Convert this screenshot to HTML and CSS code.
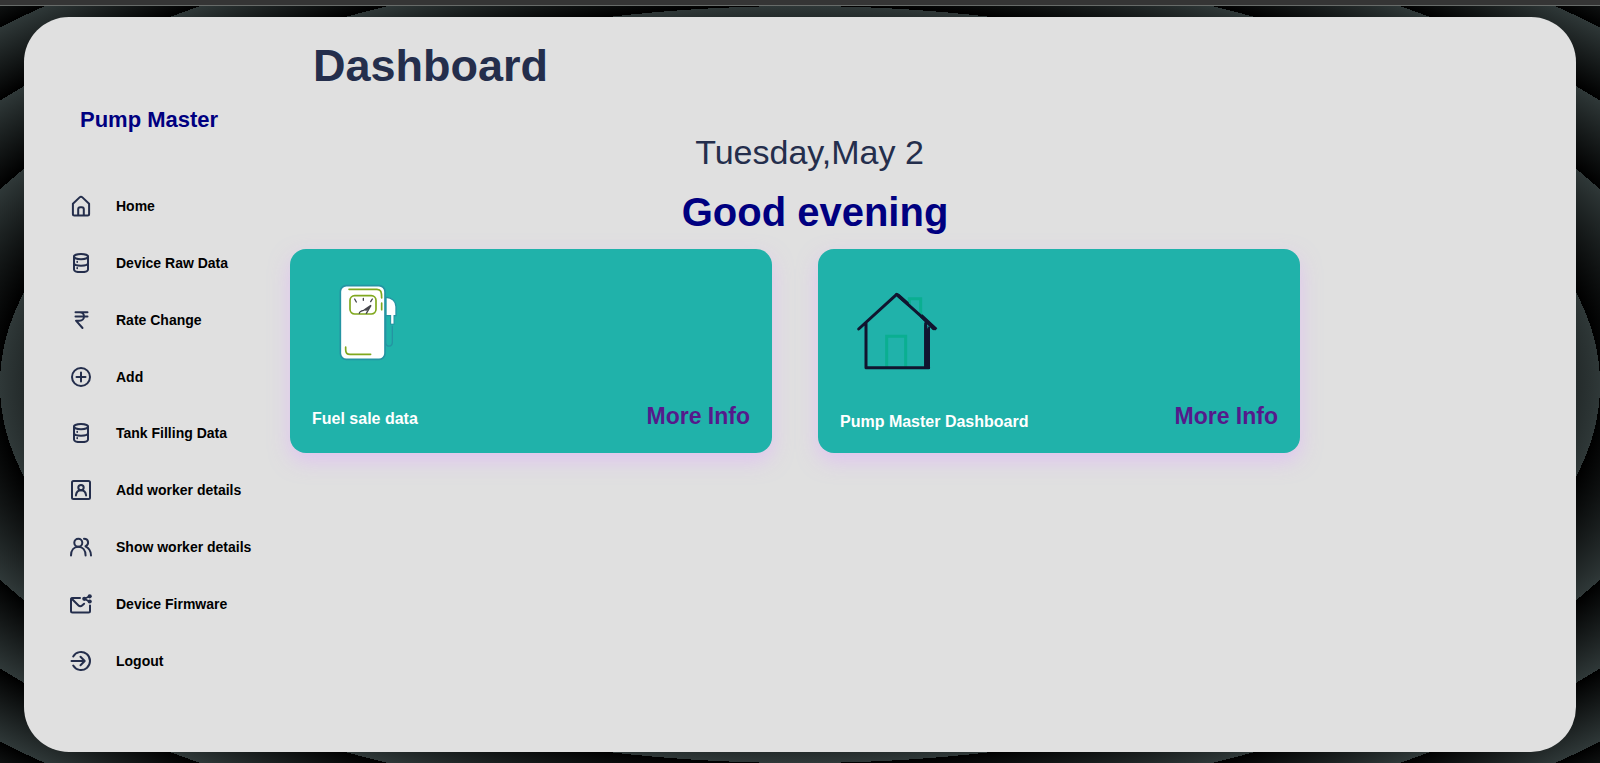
FILE: index.html
```html
<!DOCTYPE html>
<html lang="en">
<head>
<meta charset="utf-8">
<meta name="viewport" content="width=device-width, initial-scale=1">
<title>Pump Master</title>
<link rel="stylesheet" href="styles.css">
</head>
<body>
<div class="topbar"></div>
<div class="page">
  <div class="panel">
    <aside class="sidebar">
      <div class="brand">Pump Master</div>
      <nav class="menu">
        <a class="menu-item" href="#home">
          <svg class="icon" viewBox="0 0 24 24"><path d="M3.9 9.8 10.6 3.4a2 2 0 0 1 2.8 0l6.7 6.4V20a1.500 1.500 0 0 1-1.500 1.500H5.400A1.500 1.500 0 0 1 3.900 20z"/><path d="M9.200 21v-5.800a2 2 0 0 1 2-2h1.600a2 2 0 0 1 2 2V21"/></svg>
          Home</a>
        <a class="menu-item" href="#raw">
          <svg class="icon" viewBox="0 0 24 24"><ellipse cx="12" cy="5.600" rx="7" ry="2.600"/><path d="M5 5.600v12.800C5 20.100 8 21 12 21s7-.9 7-2.600V5.600M5 12c0 1.800 3 2.700 7 2.700s7-.9 7-2.700"/><path d="M8.200 10.600v.6M8.200 16.800v.6" stroke-width="1.600"/></svg>
          Device Raw Data</a>
        <a class="menu-item" href="#rate">
          <svg class="icon" viewBox="0 0 24 24"><path d="M6.500 4.200h12M6.500 8.400h12M7 4.200h3.500c6 0 6 8.500 0 8.500H7l6.500 7.300"/></svg>
          Rate Change</a>
        <a class="menu-item" href="#add">
          <svg class="icon" viewBox="0 0 24 24"><circle cx="12" cy="12" r="9"/><path d="M12 7.500v9M7.500 12h9"/></svg>
          Add</a>
        <a class="menu-item" href="#tank">
          <svg class="icon" viewBox="0 0 24 24"><ellipse cx="12" cy="5.600" rx="7" ry="2.600"/><path d="M5 5.600v12.800C5 20.100 8 21 12 21s7-.9 7-2.600V5.600M5 12c0 1.800 3 2.700 7 2.700s7-.9 7-2.700"/><path d="M8.200 10.600v.6M8.200 16.800v.6" stroke-width="1.600"/></svg>
          Tank Filling Data</a>
        <a class="menu-item" href="#add-worker">
          <svg class="icon" viewBox="0 0 24 24"><rect x="3" y="3" width="18" height="18" rx="1.500"/><circle cx="12" cy="9.600" r="2.700"/><path d="M6.900 17.400c.4-3.200 2.300-5.100 5.100-5.100s4.700 1.900 5.100 5.100"/></svg>
          Add worker details</a>
        <a class="menu-item" href="#workers">
          <svg class="icon" viewBox="0 0 24 24"><circle cx="9.300" cy="7.700" r="4"/><path d="M2 20.500c0-5.300 3-8.800 7.300-8.800s7.300 3.500 7.300 8.800M15 3.800c5 0 5.300 6 1.500 7.500 3.500 1.700 5.500 4.700 5.500 9.200"/></svg>
          Show worker details</a>
        <a class="menu-item" href="#firmware">
          <svg class="icon" viewBox="0 0 24 24"><path d="M11 6H3.500A1.500 1.500 0 0 0 2 7.500v11.500a1.500 1.500 0 0 0 1.500 1.500h16A1.500 1.500 0 0 0 21 19v-5.500"/><path d="m2.500 6.500 7 7a2.500 2.500 0 0 0 3.600 0l2-1.800"/><path d="m20.300 4.500-5 2.200 5 2.800" stroke-width="1.800"/><g class="dots"><circle cx="20.700" cy="4.300" r="2.100"/><circle cx="15.300" cy="6.800" r="2.100"/><circle cx="20.700" cy="9.500" r="2.100"/></g></svg>
          Device Firmware</a>
        <a class="menu-item" href="#logout">
          <svg class="icon" viewBox="0 0 24 24"><path d="M4.200 7.500a9 9 0 1 1 0 9M2.500 12h13M11.500 7.800l4.200 4.200-4.200 4.200"/></svg>
          Logout</a>
      </nav>
    </aside>
    <main class="main">
      <h1 class="title">Dashboard</h1>
      <p class="date">Tuesday,May 2</p>
      <h2 class="greeting">Good evening</h2>
      <div class="cards">
        <section class="card">
          <svg class="art" viewBox="-54 -9 300 300" aria-hidden="true">
            <path d="M168 67c18 0 30 13 30 28v27h-30z" fill="#fff" stroke="#2494a2" stroke-width="4"/>
            <path d="M167 124v78c0 15 20 15 20 0v-50" fill="none" stroke="#2494a2" stroke-width="4"/>
            <path d="M187 122v27" stroke="#2494a2" stroke-width="13"/>
            <path d="M187 118v28" stroke="#fff" stroke-width="7"/>
            <rect x="31" y="32" width="134" height="221" rx="18" fill="#fff" stroke="#2494a2" stroke-width="5"/>
            <g fill="none" stroke="#80a81e" stroke-width="5" stroke-linecap="round"><path d="M57 43h84c12 0 14 8 14 26M155 84v20M47 216v8c0 10 6 14 13 14h62"/><rect x="60" y="62" width="78" height="55" rx="14"/></g>
            <g fill="none" stroke="#45454b" stroke-width="4" stroke-linecap="round"><path d="m74 72 5 9M100 70v6M127 72l-5 8M88 115c0-5 3-7 13-9l22-15-14 24M108 106l12-12"/></g>
          </svg>
          <div class="card-foot"><h3 class="card-name">Fuel sale data</h3><a class="more" href="#fuel">More Info</a></div>
        </section>
        <section class="card">
          <svg class="art" viewBox="-15 -24 300 300" aria-hidden="true">
            <g fill="none" stroke="#0aaf91" stroke-width="9"><path d="M193 75V56h34v50M125 260v-91h57v91"/></g>
            <g fill="none" stroke="#11142f" stroke-width="9" stroke-linejoin="round" stroke-linecap="round"><path d="M41 147 155 43l115 103M63 128v135h188M242 130v132"/></g>
            <path d="M149 42q7-5 14 0l28 25v13l-31-26zM224 110l8-7 45 42q-4 7-14 5zM238 134l17 8v125h-17z" fill="#11142f"/>
            <path d="M248 137v8" stroke="#20b2aa" stroke-width="2"/>
          </svg>
          <div class="card-foot"><h3 class="card-name card-name-low">Pump Master Dashboard</h3><a class="more" href="#dashboard">More Info</a></div>
        </section>
      </div>
    </main>
  </div>
</div>
</body>
</html>
```
FILE: styles.css
```css
* { box-sizing: border-box; }

body {
  margin: 0;
  min-height: 100vh;
  display: flex;
  flex-direction: column;
  font-family: "Liberation Sans", Arial, sans-serif;
  color: #242e4c;
}

h1, h2, h3, p { margin: 0; }
a { text-decoration: none; }

.topbar {
  height: 6px;
  background: #353535;
  border-bottom: 1px solid #676b69;
}

.page {
  flex: 1;
  display: flex;
  padding: 11px 24px;
  background: repeating-radial-gradient(#000, #2f3838 100px);
}

.panel {
  flex: 1;
  display: flex;
  background: #e0e0e0;
  border-radius: 45px;
}

.sidebar {
  flex: 0 0 266px;
  padding: 90px 0 62px;
}

.brand {
  padding-left: 56px;
  font-size: 22px;
  line-height: 26px;
  font-weight: bold;
  color: #000080;
}

.menu {
  display: grid;
  grid-auto-rows: 1fr;
  height: 511px;
  margin-top: 45px;
}

.menu-item {
  display: flex;
  align-items: center;
  gap: 23px;
  padding-left: 45px;
  font-size: 14px;
  font-weight: bold;
  color: #000;
}

.icon {
  flex: none;
  width: 24px;
  height: 24px;
  fill: none;
  stroke: #242e4c;
  stroke-width: 2;
  stroke-linecap: round;
  stroke-linejoin: round;
}

.dots {
  fill: #242e4c;
  stroke: none;
}

.main {
  flex: 1;
  padding-top: 23px;
}

.title {
  padding-left: 23px;
  font-size: 45px;
  line-height: 52px;
}

.date {
  margin-top: 40px;
  padding-right: 247px;
  font-size: 34px;
  line-height: 40px;
  text-align: center;
}

.greeting {
  margin-top: 17px;
  padding-right: 236px;
  font-size: 40px;
  line-height: 46px;
  text-align: center;
  color: #000080;
}

.cards {
  display: grid;
  grid-template-columns: 1fr 1fr;
  gap: 46px;
  margin-top: 14px;
  padding-right: 276px;
}

.card {
  display: flex;
  flex-direction: column;
  justify-content: space-between;
  min-height: 204px;
  padding: 23px 22px 22px;
  background: #20b2aa;
  border-radius: 16px;
  box-shadow: 0 8px 20px rgba(224, 170, 255, 0.5);
}

.art {
  width: 100px;
  height: 100px;
}

.card-foot {
  display: flex;
  align-items: center;
  justify-content: space-between;
}

.card-name {
  padding-top: 6px;
  font-size: 16px;
  line-height: 18px;
  color: #fff;
}

.card-name-low { padding-top: 12px; }

.more {
  font-size: 23px;
  line-height: 30px;
  font-weight: bold;
  color: #551a8b;
}
```
